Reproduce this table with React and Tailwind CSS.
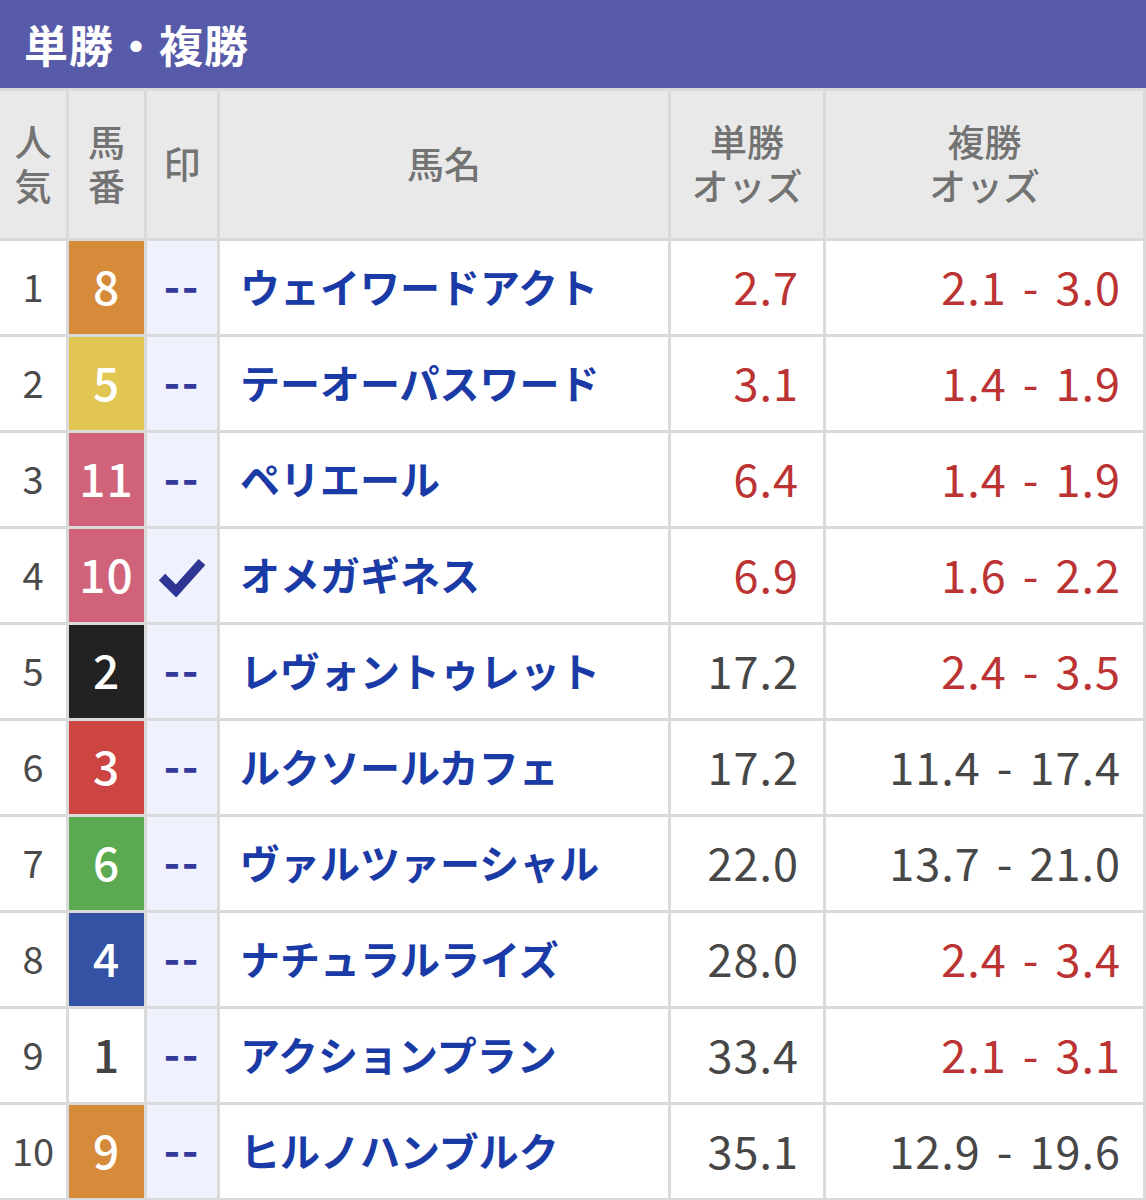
import React from 'react';

const font = { fontFamily: '"Noto Sans CJK JP", "Noto Sans", sans-serif' };

const rows = [
  { pop: 1, waku: '8', bg: 'bg-[#d68b3b]', fg: 'text-white', mark: false, name: 'ウェイワードアクト', win: '2.7', winRed: true, place: '2.1 - 3.0', placeRed: true },
  { pop: 2, waku: '5', bg: 'bg-[#e2c653]', fg: 'text-white', mark: false, name: 'テーオーパスワード', win: '3.1', winRed: true, place: '1.4 - 1.9', placeRed: true },
  { pop: 3, waku: '11', bg: 'bg-[#d0637a]', fg: 'text-white', mark: false, name: 'ペリエール', win: '6.4', winRed: true, place: '1.4 - 1.9', placeRed: true },
  { pop: 4, waku: '10', bg: 'bg-[#d0637a]', fg: 'text-white', mark: true, name: 'オメガギネス', win: '6.9', winRed: true, place: '1.6 - 2.2', placeRed: true },
  { pop: 5, waku: '2', bg: 'bg-[#222222]', fg: 'text-white', mark: false, name: 'レヴォントゥレット', win: '17.2', winRed: false, place: '2.4 - 3.5', placeRed: true },
  { pop: 6, waku: '3', bg: 'bg-[#cd4542]', fg: 'text-white', mark: false, name: 'ルクソールカフェ', win: '17.2', winRed: false, place: '11.4 - 17.4', placeRed: false },
  { pop: 7, waku: '6', bg: 'bg-[#5ba950]', fg: 'text-white', mark: false, name: 'ヴァルツァーシャル', win: '22.0', winRed: false, place: '13.7 - 21.0', placeRed: false },
  { pop: 8, waku: '4', bg: 'bg-[#3352a3]', fg: 'text-white', mark: false, name: 'ナチュラルライズ', win: '28.0', winRed: false, place: '2.4 - 3.4', placeRed: true },
  { pop: 9, waku: '1', bg: 'bg-white', fg: 'text-[#444]', mark: false, name: 'アクションプラン', win: '33.4', winRed: false, place: '2.1 - 3.1', placeRed: true },
  { pop: 10, waku: '9', bg: 'bg-[#d68b3b]', fg: 'text-white', mark: false, name: 'ヒルノハンブルク', win: '35.1', winRed: false, place: '12.9 - 19.6', placeRed: false },
];

const HeadCell = ({ children }) => (
  <div className="bg-[#e9e9e9] flex flex-col items-center justify-center text-center text-[37px] leading-[44px] font-medium text-[#737373] pb-[4px]">
    {children}
  </div>
);

const Check = () => (
  <svg width="48" height="42" viewBox="0 0 48 42">
    <path d="M4 22 L18 36 L44 7" fill="none" stroke="#2e3592" strokeWidth="9" strokeLinejoin="miter" />
  </svg>
);

const Row = ({ r }) => (
  <>
    <div className="bg-white flex items-center justify-center text-[38px] text-[#4a4a4a] pb-[4px]">{r.pop}</div>
    <div className={`${r.bg} ${r.fg} flex items-center justify-center text-[46px] font-medium tracking-[1px] pb-[4px]`}>{r.waku}</div>
    <div className="bg-[#eff2fc] flex items-center justify-center">
      {r.mark ? <Check /> : <span className="text-[44px] font-bold text-[#333a99] tracking-[2px] leading-none pb-[8px]">--</span>}
    </div>
    <div className="bg-white flex items-center pl-[20px] text-[40px] font-bold text-[#1a3aa6] whitespace-nowrap pb-[4px]">{r.name}</div>
    <div className={`bg-white flex items-center justify-end pr-[24px] text-[45px] tracking-[1px] pb-[4px] ${r.winRed ? 'text-[#bb3333]' : 'text-[#474747]'}`}>{r.win}</div>
    <div className={`bg-white flex items-center justify-end pr-[22px] text-[45px] tracking-[1px] [word-spacing:5px] whitespace-nowrap pb-[4px] ${r.placeRed ? 'text-[#bb3333]' : 'text-[#474747]'}`}>{r.place}</div>
  </>
);

export default function App() {
  return (
    <div className="w-[1146px] h-[1200px] bg-[#dadada] overflow-hidden" style={font}>
      <div className="h-[88px] bg-[#565aa8] flex items-center pl-[24px]">
        <h1 className="text-[44px] font-bold text-white tracking-[1px]">単勝・複勝</h1>
      </div>
      <div className="grid grid-cols-[66px_75px_70px_448px_152px_317px] grid-rows-[147px_repeat(10,93px)] gap-[3px] pt-[3px] pr-[3px]">
        <HeadCell><span>人</span><span>気</span></HeadCell>
        <HeadCell><span>馬</span><span>番</span></HeadCell>
        <HeadCell><span>印</span></HeadCell>
        <HeadCell><span>馬名</span></HeadCell>
        <HeadCell><span>単勝</span><span>オッズ</span></HeadCell>
        <HeadCell><span>複勝</span><span>オッズ</span></HeadCell>
        {rows.map((r) => (
          <Row key={r.pop} r={r} />
        ))}
      </div>
    </div>
  );
}
